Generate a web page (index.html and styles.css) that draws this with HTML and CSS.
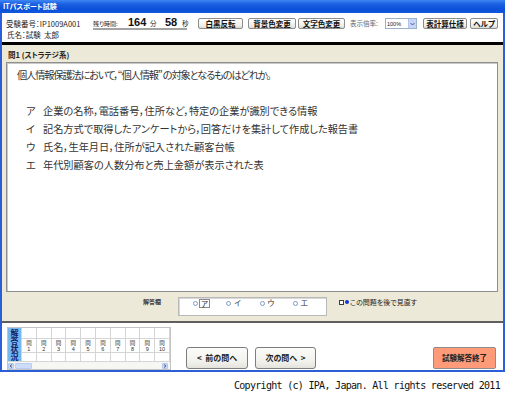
FILE: index.html
```html
<!DOCTYPE html>
<html lang="ja">
<head>
<meta charset="utf-8">
<title>ITパスポート試験</title>
<link rel="stylesheet" href="styles.css">
</head>
<body>
<div class="window">
  <div class="titlebar">ITパスポート試験</div>
  <div class="frame">
    <div class="header">
      <div class="hrow1">
        <div class="examno">受験番号：IP1009A001</div>
        <div class="timer"><span class="tl">残り時間:</span><span class="tn n1">164</span><span class="tu">分</span><span class="tn n2">58</span><span class="tu">秒</span></div>
        <div class="tb b1">白黒反転</div>
        <div class="tb b2">背景色変更</div>
        <div class="tb b3">文字色変更</div>
        <div class="zlabel">表示倍率:</div>
        <div class="select"><span class="sv">100%</span><span class="sa"><svg width="5" height="4" viewBox="0 0 5 4"><path d="M0.5 1 L2.5 3 L4.5 1" fill="none" stroke="#4d6185" stroke-width="1"/></svg></span></div>
        <div class="tb b4">表計算仕様</div>
        <div class="tb b5">ヘルプ</div>
      </div>
      <div class="hrow2">氏名：試験&nbsp;&nbsp;太郎</div>
    </div>
    <div class="rule-black"></div>
    <div class="main">
      <div class="qhead">問1 (ストラテジ系)</div>
      <div class="qbox">
        <p class="qtext">個人情報保護法において，“個人情報” の対象となるものはどれか。</p>
        <div class="opt"><span class="ol">ア</span><span>企業の名称，電話番号，住所など，特定の企業が識別できる情報</span></div>
        <div class="opt"><span class="ol">イ</span><span>記名方式で取得したアンケートから，回答だけを集計して作成した報告書</span></div>
        <div class="opt"><span class="ol">ウ</span><span>氏名，生年月日，住所が記入された顧客台帳</span></div>
        <div class="opt"><span class="ol">エ</span><span>年代別顧客の人数分布と売上金額が表示された表</span></div>
      </div>
      <div class="ansrow">
        <span class="anslabel">解答欄</span>
        <div class="ansbox">
          <span class="radio"><i class="rc rc-f"></i><span class="focus">ア</span></span>
          <span class="radio"><i class="rc"></i>イ</span>
          <span class="radio"><i class="rc"></i>ウ</span>
          <span class="radio"><i class="rc"></i>エ</span>
        </div>
        <span class="check"><i class="cb"></i><i class="dot"></i>この問題を後で見直す</span>
      </div>
    </div>
    <div class="rule-dark"></div>
    <div class="bottom">
      <div class="status">
        <div class="grid">
          <div class="scell">解答状況</div>
          <div class="c"></div><div class="c"></div><div class="c"></div><div class="c"></div><div class="c"></div><div class="c"></div><div class="c"></div><div class="c"></div><div class="c"></div><div class="c"></div>
          <div class="c q"><span class="qm">問</span><span class="qn">1</span></div>
          <div class="c q"><span class="qm">問</span><span class="qn">2</span></div>
          <div class="c q"><span class="qm">問</span><span class="qn">3</span></div>
          <div class="c q"><span class="qm">問</span><span class="qn">4</span></div>
          <div class="c q"><span class="qm">問</span><span class="qn">5</span></div>
          <div class="c q"><span class="qm">問</span><span class="qn">6</span></div>
          <div class="c q"><span class="qm">問</span><span class="qn">7</span></div>
          <div class="c q"><span class="qm">問</span><span class="qn">8</span></div>
          <div class="c q"><span class="qm">問</span><span class="qn">9</span></div>
          <div class="c q"><span class="qm">問</span><span class="qn">10</span></div>
          <div class="c"></div><div class="c"></div><div class="c"></div><div class="c"></div><div class="c"></div><div class="c"></div><div class="c"></div><div class="c"></div><div class="c"></div><div class="c"></div>
        </div>
        <div class="scroll">
          <span class="sbtn"><svg width="4" height="4" viewBox="0 0 4 4"><path d="M3 0.5 L1 2 L3 3.5" fill="none" stroke="#4d6185" stroke-width="1"/></svg></span>
          <span class="thumb"></span>
          <span class="sbtn sbtn-r"><svg width="4" height="4" viewBox="0 0 4 4"><path d="M1 0.5 L3 2 L1 3.5" fill="none" stroke="#4d6185" stroke-width="1"/></svg></span>
        </div>
      </div>
      <div class="nav prev">&lt;&nbsp;&nbsp;前の問へ</div>
      <div class="nav next">次の問へ&nbsp;&nbsp;&gt;</div>
      <div class="end">試験解答終了</div>
    </div>
  </div>
</div>
<div class="copy">Copyright (c) IPA, Japan. All rights reserved 2011</div>
</body>
</html>
```
FILE: styles.css
```css
* { box-sizing: border-box; margin: 0; padding: 0; }
body {
  width: 506px; height: 400px; overflow: hidden; background: #fff;
  font-family: "Noto Sans CJK JP", "Noto Sans", sans-serif; color: #000;
  font-feature-settings: "palt";
}
.window { width: 505px; }
.titlebar {
  height: 13px; line-height: 13px; padding-left: 3px;
  background: linear-gradient(to bottom, #3f87f4 0%, #1c61e2 30%, #0b50d8 70%, #1158de 100%);
  color: #fff; font-size: 7px; font-weight: bold;
}
.frame { border: 2px solid #2a5fd8; border-top: 0; }

/* header */
.header { height: 29px; padding: 4px 0 0 4px; background: #fff; }
.hrow1 { display: flex; align-items: center; height: 13px; }
.examno { width: 87px; font-size: 7.5px; line-height: 9px; color: #222; white-space: nowrap; }
.timer {
  width: 94px; height: 13px; margin-right: 11px; display: flex; align-items: flex-end;
  border-bottom: 2px solid #a3a3a3; color: #222;
}
.tl { font-size: 6px; line-height: 9px; width: 22px; white-space: nowrap; flex: none; }
.tn { font-family: "Liberation Sans", Arial, sans-serif; font-weight: bold; font-size: 11px; line-height: 11px; color: #111; flex: none; }
.n1 { margin-left: 13px; width: 20px; }
.n2 { margin-left: 5px; width: 15px; }
.tu { font-size: 6.5px; line-height: 9px; margin-left: 2px; width: 10px; flex: none; }
.tb {
  height: 11px; display: flex; align-items: center; justify-content: center; white-space: nowrap;
  font-size: 7.5px; font-weight: bold; line-height: 9px; color: #111;
  border: 1px solid #8d8d8d; border-radius: 2px;
  background: linear-gradient(to bottom, #ffffff, #f0efe9 70%, #dcdbd3);
}
.b1 { width: 45px; }
.b2 { width: 48px; margin-left: 5px; }
.b3 { width: 47px; margin-left: 2px; }
.zlabel { margin-left: 5px; width: 33px; font-size: 6.5px; line-height: 9px; color: #666; white-space: nowrap; }
.select {
  margin-left: 2px; width: 32px; height: 11px; display: flex; align-items: center;
  border: 1px solid #9db0cc; background: #fff;
}
.sv { flex: 1; font-family: "Liberation Sans", Arial, sans-serif; font-size: 5.5px; padding-left: 1px; color: #222; }
.sa { width: 8px; height: 9px; display: flex; align-items: center; justify-content: center; background: #c6d6f6; border-left: 1px solid #b0c4ec; }
.b4 { width: 44px; margin-left: 6px; }
.b5 { width: 28px; margin-left: 3px; }
.hrow2 { height: 9px; line-height: 9px; font-size: 7.5px; color: #222; padding-left: 1px; }

.rule-black { height: 3px; background: #000; }

/* main */
.main { height: 276px; background: #ece9d8; padding: 0 5px 0 4px; }
.qhead { height: 17px; padding: 3px 0 0 2px; line-height: 14px; font-size: 7.5px; font-weight: bold; color: #222; }
.qbox {
  height: 230px; background: #fff; padding: 3px 0 0 10px;
  border: 1px solid #8e8e8e; box-shadow: inset 1px 1px 0 #c9c9c9;
  font-size: 10.2px; line-height: 18px; color: #333;
}
.qtext { margin-bottom: 18px; letter-spacing: -1.1px; }
.opt { display: flex; }
.ol { display: inline-block; margin-left: 9px; width: 17px; }

.ansrow { height: 29px; display: flex; align-items: flex-start; padding-top: 5px; }
.anslabel { margin-left: 137px; width: 35px; padding-top: 1px; font-size: 6px; line-height: 8px; font-weight: bold; color: #333; }
.ansbox {
  width: 149px; height: 19px; background: #fff; padding: 1px 0 0 14px; display: flex; align-items: flex-start;
  border: 1px solid #b9b9b9; box-shadow: inset 1px 1px 0 #d8d8d8;
}
.radio { width: 34px; display: inline-flex; align-items: center; font-size: 7.5px; line-height: 8px; color: #333; height: 8px; }
.rc { display: inline-block; width: 5px; height: 5px; border: 1px solid #7e9cc6; border-radius: 50%; margin-right: 3px; }
.rc-f { margin-right: 1px; }
.focus { border: 1px solid #8a8a8a; padding: 0 1px; height: 9px; line-height: 7px; }
.check { margin-left: 12px; padding-top: 1px; display: flex; align-items: center; font-size: 7px; line-height: 8px; color: #222; }
.cb { display: inline-block; width: 5px; height: 5px; border: 1px solid #3c3c3c; background: #fff; }
.dot { display: inline-block; width: 4px; height: 4px; border-radius: 50%; background: #1236d4; margin: 0 1px 0 1px; }

.rule-dark { height: 2px; background: #5f5f5f; }

/* bottom */
.bottom { height: 47px; background: #fff; display: flex; align-items: flex-start; padding: 4px 0 0 5px; }
.status { width: 164px; border: 1px solid #c4c4c4; }
.grid {
  display: grid; grid-template-columns: 14px repeat(10, 1fr); grid-template-rows: 11px 14px 9px;
}
.scell {
  grid-row: 1 / span 3; background: #74b8f2; writing-mode: vertical-rl;
  font-size: 8px; font-weight: bold; line-height: 14px; text-align: center; color: #10206a;
  letter-spacing: 0; padding-top: 1px; border-right: 1px solid #d5d5d5; border-bottom: 1px solid #d5d5d5;
}
.c { border-right: 1px solid #d5d5d5; border-bottom: 1px solid #d5d5d5; }
.q { display: flex; flex-direction: column; align-items: center; padding-top: 1px; color: #333; }
.qm { font-size: 5.5px; line-height: 6px; }
.qn { font-family: "Liberation Sans", Arial, sans-serif; font-size: 5.5px; line-height: 6px; }
.scroll { height: 7px; display: flex; align-items: center; padding: 0 2px 0 0; background: #f6f6f2; }
.sbtn { width: 6px; height: 6px; display: flex; align-items: center; justify-content: center; background: #c8d8f7; border: 1px solid #b4c7ee; border-radius: 1px; }
.sbtn-r { margin-left: auto; }
.thumb { width: 17px; height: 6px; margin-left: 1px; background: #cddcf8; border: 1px solid #b8cbf0; border-radius: 1px; }

.nav {
  height: 22px; margin-top: 20px; display: flex; align-items: center; justify-content: center;
  font-size: 8px; font-weight: bold; line-height: 10px; color: #222;
  border: 1px solid #7d7d7d; border-radius: 3px;
  background: linear-gradient(to bottom, #fbfbf9, #f1f1ec 70%, #e3e2da);
}
.prev { width: 62px; margin-left: 15px; }
.next { width: 61px; margin-left: 7px; }
.end {
  width: 63px; height: 22px; margin-top: 20px; margin-left: auto; margin-right: 7px;
  display: flex; align-items: center; justify-content: center;
  font-size: 7.5px; font-weight: bold; line-height: 10px; color: #222;
  background: #ff9b78; border: 1px solid #8c8c8c; border-radius: 2px;
}

.copy {
  padding: 8px 6px 0 0; text-align: right; line-height: 12px;
  font-family: "DejaVu Sans Mono", monospace; font-size: 10px; letter-spacing: -0.7px; color: #111;
  font-feature-settings: normal;
}
```
